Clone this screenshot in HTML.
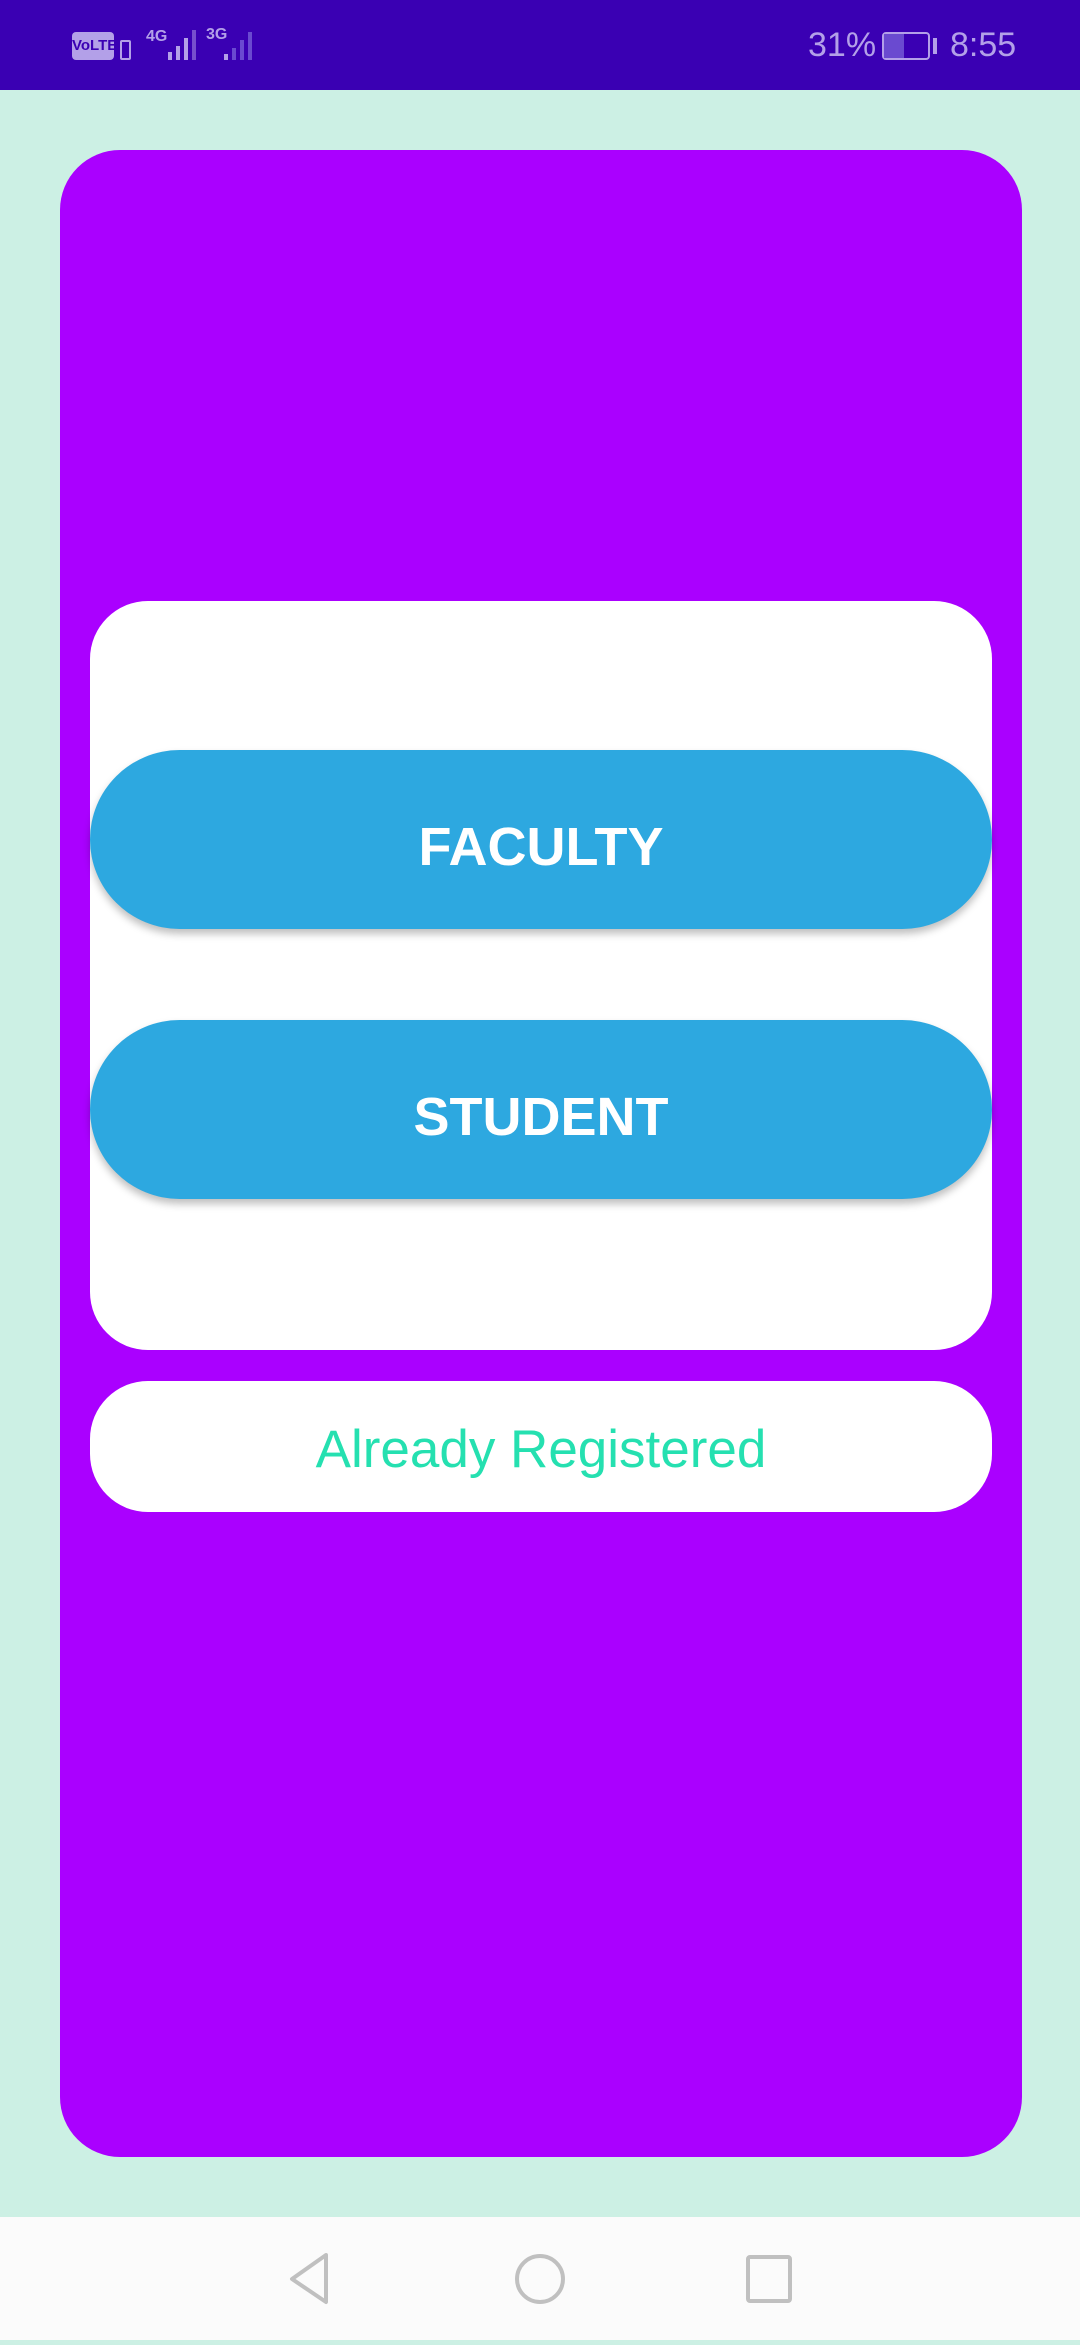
<!DOCTYPE html>
<html><head><meta charset="utf-8"><style>
*{margin:0;padding:0;box-sizing:border-box}
html,body{width:1080px;height:2340px}
body{background:#ccf0e4;position:relative;overflow:hidden;font-family:"Liberation Sans",Roboto,sans-serif}
.status{position:absolute;left:0;top:0;width:1080px;height:90px;background:#3a00b3;color:#b3a0e8}
.card{position:absolute;left:60px;top:150px;width:962px;height:2007px;background:#aa00ff;border-radius:60px}
.white{position:absolute;left:90px;top:601px;width:902px;height:749px;background:#fff;border-radius:58px}
.btn{position:absolute;left:90px;width:902px;height:179px;background:#2da8e0;border-radius:90px;color:#fff;font-size:54px;font-weight:bold;display:flex;align-items:center;justify-content:center;padding-top:14px;box-shadow:0 5px 8px rgba(0,0,0,.25)}
.reg{position:absolute;left:90px;top:1381px;width:902px;height:131px;background:#fff;border-radius:58px;color:#25e0b0;font-size:53px;display:flex;align-items:center;justify-content:center;padding-top:6px}
.nav{position:absolute;left:0;bottom:0;width:1080px;height:123px;background:#fbfbfb}
</style></head><body>
<div class="status">
<div style="position:absolute;left:72px;top:32px;width:42px;height:28px;background:#b3a0e8;border-radius:4px;color:#3a00b3;font-size:15px;font-weight:bold;line-height:28px;text-align:center">VoLTE</div>
<div style="position:absolute;left:120px;top:40px;width:11px;height:20px;border:2px solid #b3a0e8;border-radius:2px"></div>
<div style="position:absolute;left:146px;top:28px;font-size:16px;font-weight:bold">4G</div>
<svg style="position:absolute;left:146px;top:28px" width="115" height="34"><g fill="#b3a0e8"><rect x="22" y="24" width="4" height="8"/><rect x="30" y="18" width="4" height="14"/><rect x="38" y="10" width="4" height="22"/><rect x="46" y="2" width="4" height="30" opacity=".5"/><rect x="78" y="26" width="4" height="6"/></g><g fill="#6a4ad0"><rect x="86" y="20" width="4" height="12"/><rect x="94" y="12" width="4" height="20"/><rect x="102" y="4" width="4" height="28"/></g></svg>
<div style="position:absolute;left:206px;top:26px;font-size:16px;font-weight:bold">3G</div>
<div style="position:absolute;left:808px;top:26px;font-size:34px">31%</div>
<div style="position:absolute;left:882px;top:32px;width:48px;height:28px;border:2px solid #b3a0e8;border-radius:4px"><div style="width:20px;height:100%;background:#6a4ad0"></div></div>
<div style="position:absolute;left:933px;top:38px;width:4px;height:16px;background:#b3a0e8"></div>
<div style="position:absolute;left:950px;top:26px;font-size:34px">8:55</div>
</div>
<div class="card"></div>
<div class="white"></div>
<div class="btn" style="top:750px">FACULTY</div>
<div class="btn" style="top:1020px">STUDENT</div>
<div class="reg">Already Registered</div>
<div class="nav">
<svg width="1080" height="123" fill="none" stroke="#c0c0c0" stroke-width="4" stroke-linejoin="round"><polygon points="326,38 292,62 326,85"/><circle cx="540" cy="62" r="23"/><rect x="748" y="40" width="42" height="44" rx="2"/></svg>
</div>
</body></html>
